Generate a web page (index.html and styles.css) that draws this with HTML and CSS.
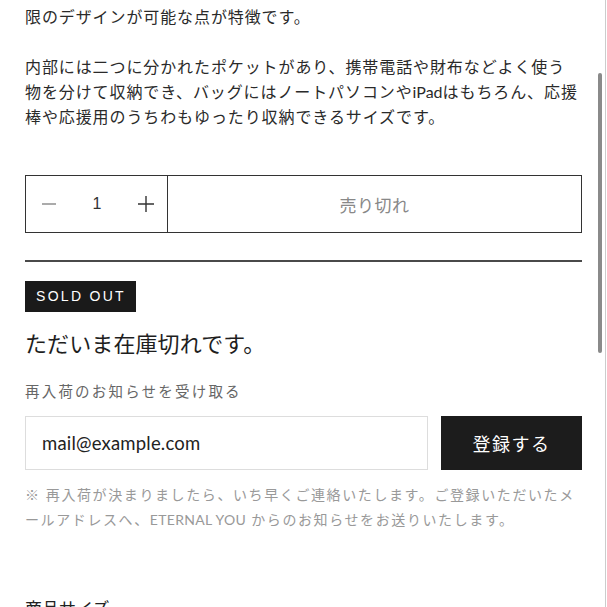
FILE: index.html
```
<!DOCTYPE html>
<html lang="ja">
<head>
<meta charset="utf-8">
<link rel="stylesheet" href="styles.css">
</head>
<body>
<div class="page">
  <p class="desc">限のデザインが可能な点が特徴です。</p>
  <p class="desc gap">内部には二つに分かれたポケットがあり、携帯電話や財布などよく使う物を分けて収納でき、バッグにはノートパソコンや<span class="latin">iPad</span>はもちろん、応援棒や応援用のうちわもゆったり収納できるサイズです。</p>

  <div class="buy">
    <div class="qty">
      <span class="qbtn minus"><svg width="14" height="14" viewBox="0 0 14 14"><path d="M0 7h14" stroke="#666" stroke-width="1.1"/></svg></span>
      <span class="qnum">1</span>
      <span class="qbtn plus"><svg width="16" height="16" viewBox="0 0 16 16"><path d="M0 8h16M8 0v16" stroke="#333" stroke-width="1.4"/></svg></span>
    </div>
    <div class="soldbtn">売り切れ</div>
  </div>

  <hr class="rule">

  <div class="badge">SOLD OUT</div>
  <h2 class="status">ただいま在庫切れです。</h2>
  <div class="label">再入荷のお知らせを受け取る</div>
  <div class="notify">
    <div class="email">mail@example.com</div>
    <div class="submit">登録する</div>
  </div>
  <p class="note">※ 再入荷が決まりましたら、いち早くご連絡いたします。ご登録いただいたメールアドレスへ、<span class="brand">ETERNAL YOU</span> からのお知らせをお送りいたします。</p>

  <h3 class="next">商品サイズ</h3>
</div>
<div class="track"></div>
<div class="thumb"></div>
</body>
</html>
```

FILE: styles.css
```
html, body {
  margin: 0;
  padding: 0;
  background: #fff;
  overflow: hidden;
  height: 607px;
}
body {
  font-family: "Lato", "Noto Sans CJK JP", sans-serif;
  color: #222;
  position: relative;
}
.page {
  padding: 4px 25px 0 25px;
}
.desc {
  margin: 0;
  font-size: 16px;
  line-height: 25px;
  letter-spacing: 0.9px;
  color: #2a2a2a;
}
.desc.gap {
  margin-top: 25px;
}
.latin {
  font-family: "Lato", sans-serif;
  letter-spacing: 0;
}
.buy {
  margin-top: 46px;
  display: flex;
  height: 58px;
  border: 1px solid #333;
  box-sizing: border-box;
}
.qty {
  width: 142px;
  display: flex;
  align-items: center;
  justify-content: space-between;
  padding: 0 13px 0 16px;
  box-sizing: border-box;
  border-right: 1px solid #333;
}
.qbtn {
  display: flex;
  align-items: center;
}
.qnum {
  font-size: 16px;
  color: #333;
  font-family: "Liberation Sans", sans-serif;
}
.soldbtn {
  flex: 1;
  display: flex;
  align-items: center;
  justify-content: center;
  font-size: 17px;
  color: #888;
  letter-spacing: 0.5px;
}
.rule {
  margin: 27px 0 0 0;
  border: 0;
  border-top: 2px solid #4a4a4a;
  height: 0;
}
.badge {
  margin-top: 19px;
  display: inline-block;
  background: #1a1a1a;
  color: #fff;
  font-family: "Liberation Sans", sans-serif;
  font-size: 14px;
  letter-spacing: 2.3px;
  height: 31px;
  line-height: 31px;
  padding: 0 10px 0 11px;
}
.status {
  margin: 17px 0 0 0;
  font-size: 22px;
  font-weight: 400;
  line-height: 30px;
  letter-spacing: 0.1px;
  color: #1e1e1e;
}
.label {
  margin-top: 22px;
  font-size: 14.5px;
  line-height: 22px;
  letter-spacing: 2.2px;
  color: #666;
}
.notify {
  margin-top: 13px;
  display: flex;
  gap: 13px;
  height: 54px;
}
.email {
  flex: 1;
  border: 1px solid #ddd;
  display: flex;
  align-items: center;
  padding-left: 16px;
  font-family: "Lato", sans-serif;
  font-size: 18.5px;
  letter-spacing: 0.2px;
  color: #222;
}
.submit {
  width: 141px;
  background: #1c1c1c;
  color: #fff;
  display: flex;
  align-items: center;
  justify-content: center;
  font-size: 18px;
  letter-spacing: 1.5px;
}
.note {
  margin: 12px 0 0 0;
  font-size: 14px;
  line-height: 25px;
  letter-spacing: 1.6px;
  color: #999;
}
.brand {
  letter-spacing: 0.3px;
}
.next {
  margin: 64px 0 0 0;
  font-size: 17px;
  font-weight: 400;
  line-height: 26px;
  color: #222;
}
.track {
  position: absolute;
  top: 0;
  right: 1px;
  width: 1px;
  height: 607px;
  background: #ccc;
}
.thumb {
  position: absolute;
  top: 73px;
  left: 598px;
  width: 4px;
  height: 280px;
  background: #8a8a8a;
  border-radius: 2px;
}
```
